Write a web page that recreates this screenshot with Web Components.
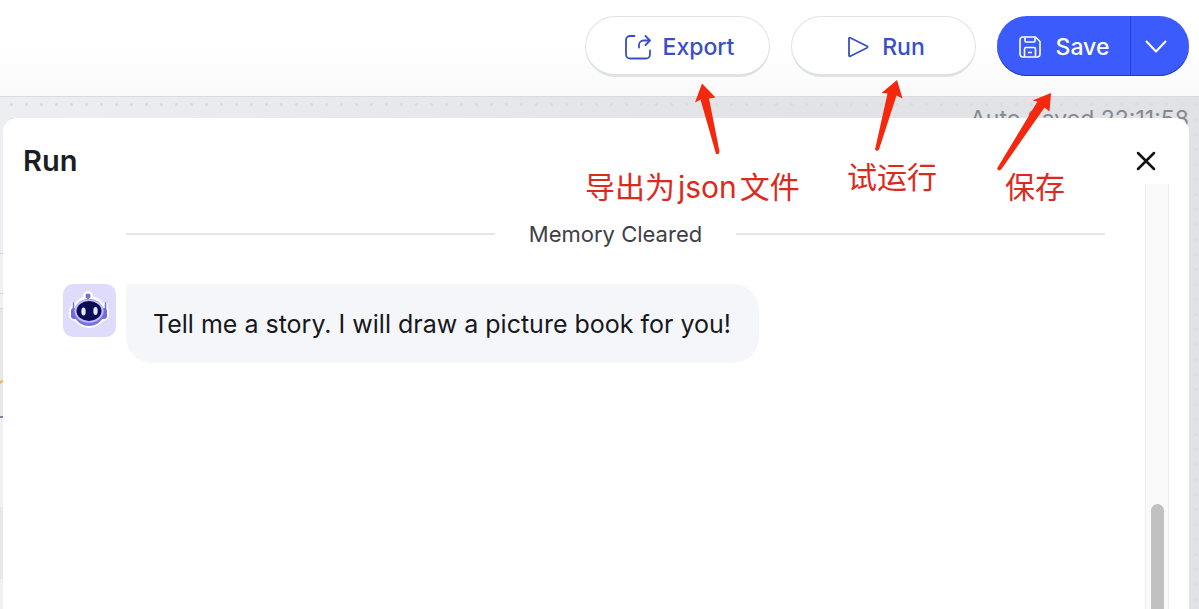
<!DOCTYPE html>
<html lang="en">
<head>
<meta charset="utf-8">
<title>Run</title>
<style>
html, body { height: 100%; margin: 0; }
body { font-family: Inter, "Noto Sans CJK SC", sans-serif; color: #1c1d23; background: #fff; overflow: hidden; }
</style>
</head>
<body>
<run-page></run-page>
<script>
const define = (name, html) => {
  const template = document.createElement('template');
  template.innerHTML = html;
  customElements.define(name, class extends HTMLElement {
    constructor() {
      super();
      this.attachShadow({ mode: 'open' }).append(template.content.cloneNode(true));
    }
  });
};

define('pill-button', `
<style>
:host { display: block; width: 185px; }
button { box-sizing: border-box; width: 100%; height: 61px; display: flex; align-items: center; justify-content: center; gap: 12px;
  border: 1px solid #dfe3e5; border-bottom: 3px solid #dee2e2; border-radius: 31px; background: #fff; color: #3a4fc4; padding: 2px 0 0 4px;
  font: 500 23px/32px Inter, sans-serif; }
</style>
<button type="button"><slot name="icon"></slot><slot></slot></button>`);

define('save-button', `
<style>
:host { display: flex; width: 192px; height: 60px; border-radius: 30px; overflow: hidden; background: #3c5bfc; box-shadow: inset 0 -1px #2237b8; }
button { border: 0; background: none; color: #fff; padding: 2px 0 0; display: flex; align-items: center; justify-content: center; font: 500 23px/32px Inter, sans-serif; }
.main { flex: 1; gap: 14px; }
.more { width: 59px; border-left: 1px solid #2741cf; padding-right: 8px; }
</style>
<button class="main" type="button">
  <svg width="24" height="24" viewBox="0 0 24 24" fill="none" stroke="#fff" stroke-width="1.6" stroke-linejoin="round"><path d="M5 2h12.500L22 6.500V19a3 3 0 0 1-3 3H5a3 3 0 0 1-3-3V5a3 3 0 0 1 3-3Z"/><path d="M7 2.500v3.500a1 1 0 0 0 1 1h8a1 1 0 0 0 1-1V2.500M6.500 21.500V14a1.500 1.500 0 0 1 1.500-1.500h8a1.500 1.500 0 0 1 1.500 1.500v7.500M10 17.500h4"/></svg>
  <span>Save</span>
</button>
<button class="more" type="button" aria-label="More save options">
  <svg width="22" height="14" viewBox="0 0 22 14" fill="none" stroke="#fff" stroke-width="2" stroke-linecap="round" stroke-linejoin="round"><path d="M1.500 1.500 11 11.500l9.500-10"/></svg>
</button>`);

define('top-bar', `
<style>
:host { display: flex; box-sizing: border-box; height: 97px; flex: none; justify-content: flex-end; align-items: flex-start; gap: 21px;
  padding: 16px 10px 0; border-bottom: 1px solid #d9dbdf; background: linear-gradient(#fff 50%, #f9f9fa); }
</style>
<pill-button><svg slot="icon" width="26" height="26" viewBox="0 0 26 26" fill="none" stroke="currentColor" stroke-width="1.800" stroke-linecap="round" stroke-linejoin="round"><path d="M9.500 2H5a4 4 0 0 0-4 4v14.500a4 4 0 0 0 4 4h16a4 4 0 0 0 4-4V16.500"/><path d="M14 13.500V11a4.500 4.500 0 0 1 4.500-4.500H24.500M20.500 2l4.500 4.500-4.500 4.500"/></svg>Export</pill-button>
<pill-button><svg slot="icon" width="24" height="24" viewBox="0 0 24 24" fill="none" stroke="currentColor" stroke-width="1.800" stroke-linejoin="round"><path d="M3 3.500v17a.8.8 0 0 0 1.200.7l17-8.500a.8.8 0 0 0 0-1.400l-17-8.500A.8.8 0 0 0 3 3.500Z"/></svg>Run</pill-button>
<save-button></save-button>`);

define('bot-avatar', `
<style>:host { display: block; flex: none; } svg { display: block; }</style>
<svg width="53" height="53" viewBox="0 0 53 53" role="img" aria-label="Bot">
  <rect width="53" height="53" rx="10" fill="#dedbfb"/>
  <g stroke="#fff" stroke-width="4" stroke-linejoin="round" fill="#fff"><circle cx="25" cy="12" r="3"/><rect x="8" y="23" width="36" height="12" rx="4"/><ellipse cx="26" cy="28" rx="15" ry="14"/><path d="M10.500 19v5M42.500 19v5"/></g>
  <path d="M10.500 19v6M42.500 19v6M25 12v5" stroke="#7770c9" stroke-width="1.500" stroke-linecap="round"/>
  <circle cx="25" cy="12" r="2.500" fill="#7770c9"/>
  <rect x="8" y="24" width="36" height="11" rx="3" fill="#716be0"/>
  <ellipse cx="26" cy="28.500" rx="15" ry="13.500" fill="#7973e6"/>
  <ellipse cx="26" cy="27" rx="14.500" ry="11.500" fill="#c5c1fb"/>
  <ellipse cx="26" cy="27" rx="12.500" ry="10" fill="#0c0b56"/>
  <ellipse cx="20.500" cy="27.500" rx="2.200" ry="4" fill="#e4e5ff"/><ellipse cx="32.500" cy="27" rx="2.200" ry="4" fill="#e4e5ff"/>
</svg>`);

define('section-divider', `
<style>
:host { display: flex; align-items: center; gap: 34px; font-size: 22px; line-height: 32px; color: #3f4046; }
:host::before, :host::after { content: ""; flex: 1; height: 2px; background: #e4e6e9; }
</style><slot></slot>`);

define('chat-message', `
<style>
:host { display: flex; align-items: flex-start; gap: 10px; }
p { margin: 0; padding: 24px 28px 23px 27px; border-radius: 4px 26px 26px 26px; background: #f5f6fa; font-size: 25px; line-height: 32px; color: #17181c; }
</style><bot-avatar></bot-avatar><p><slot></slot></p>`);

define('scroll-rail', `
<style>
:host { display: flex; flex-direction: column; align-items: center; box-sizing: border-box; width: 24px; border: 1px solid #ececee; border-width: 0 1px; background: #fafafa; padding-top: 320px; }
span { width: 13px; flex: 1; border-radius: 7px 7px 0 0; background: #c1c1c1; }
</style><span></span>`);

define('run-panel', `
<style>
:host { display: flex; flex-direction: column; background: #fff; border-radius: 14px 14px 0 0; }
header { display: flex; justify-content: space-between; align-items: center; padding: 20px 31px 0 20px; height: 46px; }
h1 { margin: 0; font-size: 29px; line-height: 46px; font-weight: 600; }
button { border: 0; background: none; padding: 0; width: 24px; height: 24px; display: grid; place-items: center; }
.body { flex: 1; display: flex; }
main { flex: 1; display: flex; flex-direction: column; gap: 34px; padding: 34px 40px 0 60px; }
section-divider { margin-left: 63px; }
scroll-rail { margin-right: 20px; }
</style>
<header><h1>Run</h1>
<button type="button" aria-label="Close"><svg width="20" height="20" viewBox="0 0 20 20" stroke="#111" stroke-width="2.500" stroke-linecap="round"><path d="m2 2 16 16M18 2 2 18"/></svg></button></header>
<div class="body"><main><section-divider>Memory Cleared</section-divider>
<chat-message>Tell me a story. I will draw a picture book for you!</chat-message></main><scroll-rail></scroll-rail></div>`);

define('flow-canvas', `
<style>
:host { position: relative; flex: 1; display: flex; padding: 21px 10px 0 3px;
  background: radial-gradient(circle, #d9dbdf 1px, transparent 2px) 4px 0 / 15px 15px, linear-gradient(90deg, #edeef1, #e2e4e8 60%, #e0e2e6); }
.saved { position: absolute; right: 10px; top: 8px; font-size: 23px; line-height: 28px; color: #86888e; }
.edge { position: absolute; left: 0; top: 0; }
run-panel { position: relative; flex: 1; }
</style>
<span class="saved">Auto Saved 22:11:58</span>
<svg class="edge" width="3" height="512"><path fill="#f1f1f3" d="M0 156h3v56H0zM0 320h3v192H0z"/><path fill="#e8e8ea" d="M0 212h3v107H0zM0 410h3v72H0z"/><path fill="#d3d3d8" d="M0 156h3v1H0zM0 196h3v1H0zM0 211h3v1H0z"/><path fill="#efb65d" d="M0 284l3-1v2l-3 2z"/><path fill="#7686ad" d="M0 319h3v2H0z"/></svg>
<run-panel></run-panel>`);

define('red-notes', `
<style>
:host { position: absolute; top: 0; right: 0; width: 629px; height: 215px; pointer-events: none; color: #dc2a1d; font-size: 30px; line-height: 40px; white-space: nowrap; }
svg { position: absolute; inset: 0; }
p { position: absolute; margin: 0; }
.export { left: 15px; top: 167px; }
.export span { margin: 0 3px; }
.run { left: 277px; top: 157px; }
.save { left: 435px; top: 167px; }
</style>
<svg width="629" height="215" viewBox="0 0 629 215" fill="#f5270c">
<path d="M132 83.500 145.500 97.500 139 98.500 149.500 151.500Q149.500 154.500 146 154L130.500 99.500 125 102.500Z"/>
<path d="M327 80 332.500 98.500 326.500 95.500 309 149.500Q307 152 305 149.500L317.500 93.500 311.500 93Z"/>
<path d="M481 93 479.500 111.500 474.500 107.500 431.500 169Q429 172 427 168.500L467.500 101.500 462.500 100.500Z"/>
</svg>
<p class="export" lang="zh">导出为<span>json</span>文件</p>
<p class="run" lang="zh">试运行</p>
<p class="save" lang="zh">保存</p>`);

define('run-page', `
<style>:host { position: relative; display: flex; flex-direction: column; min-height: 100%; height: 100vh; }</style>
<top-bar></top-bar><flow-canvas></flow-canvas><red-notes></red-notes>`);
</script>
</body>
</html>
